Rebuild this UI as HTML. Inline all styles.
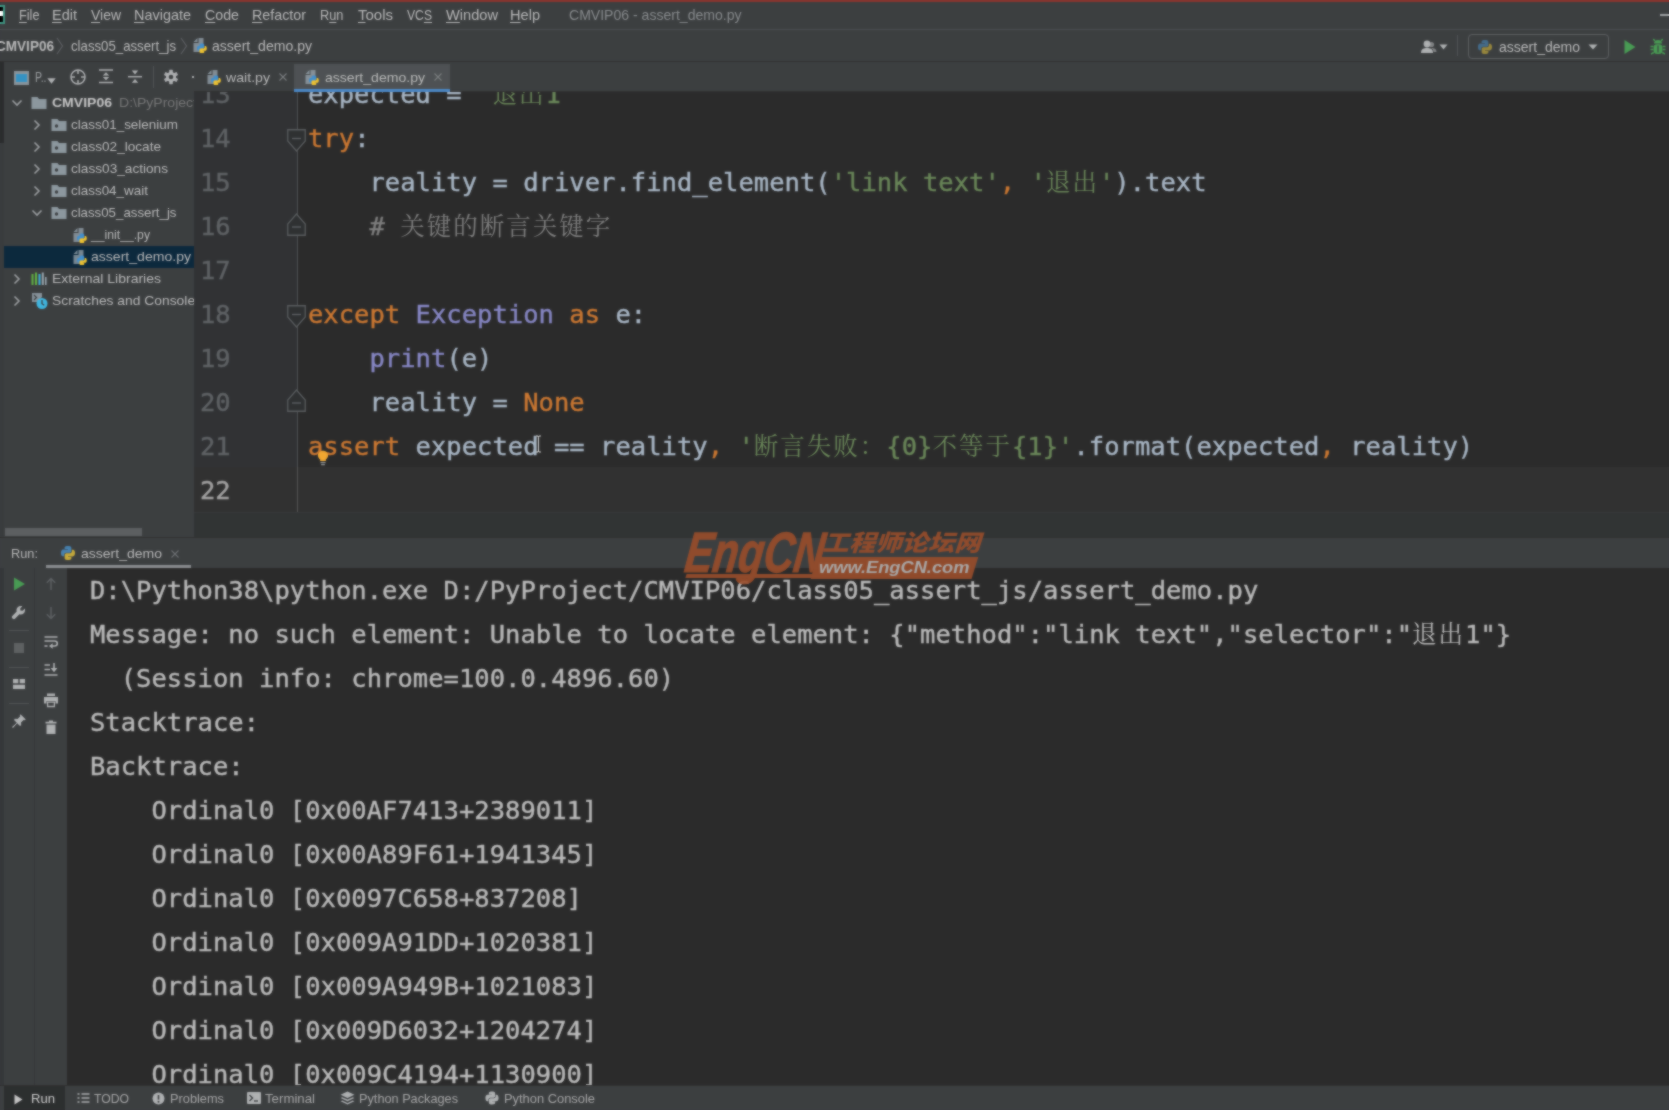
<!DOCTYPE html>
<html lang="zh">
<head>
<meta charset="utf-8">
<title>CMVIP06 - assert_demo.py</title>
<style>
*{box-sizing:border-box;margin:0;padding:0}
html,body{width:1669px;height:1110px;overflow:hidden;background:#3c3f41}
body{position:relative;font-family:"Liberation Sans","Noto Sans CJK SC",sans-serif;font-size:13.5px;color:#bbbbbb}
#w{position:absolute;left:0;top:0;width:1669px;height:1110px;will-change:transform;}
#soft{position:absolute;left:0;top:0;width:1669px;height:1110px;-webkit-backdrop-filter:blur(0.8px);backdrop-filter:blur(0.8px);opacity:.65;pointer-events:none}
.abs{position:absolute}
.t{position:absolute;white-space:pre;line-height:1;transform-origin:0 50%}
u{text-decoration-thickness:1px;text-underline-offset:2px}
#redline{left:-10px;top:-10px;width:1689px;height:12px;background:#88352f}
#menubar{left:0;top:2px;width:1679px;height:28px;background:#3c3f41;border-bottom:1px solid #4b4e50}
#menubar .t{top:6px;font-size:14.5px;color:#bbbbbb}
#navbar{left:0;top:30px;width:1679px;height:32px;background:#3c3f41;border-bottom:1px solid #323232}
#navbar .t{top:9px;font-size:14.5px;color:#bbbbbb}
#proj{left:0;top:62px;width:194px;height:475px;background:#3c3f41}
#ptool{left:0;top:0;width:194px;height:29px}
.row{position:absolute;left:4px;width:190px;height:22px}
.row .t{top:4px;font-size:13.5px;color:#bbbbbb}
.sel{background:#0d293e}
#tabs{left:194px;top:62px;width:1485px;height:30px;background:#3c3f41}
#tabs .t{top:9px;font-size:13.5px;color:#bbbbbb}
#editor{left:194px;top:92px;width:1485px;height:420px;background:#2b2b2b;overflow:hidden}
#gutter{left:0;top:0;width:104px;height:420px;background:#313335;border-right:1.5px solid #4f5153}
.mono{font-family:"DejaVu Sans Mono","Liberation Mono","Noto Serif CJK SC",monospace;font-size:25.5px;letter-spacing:0.02px;-webkit-text-stroke:0.4px}
.ln{position:absolute;left:6px;color:#606366;line-height:44px;height:44px;white-space:pre}
.cl{position:absolute;left:114px;color:#a9b7c6;line-height:44px;height:44px;white-space:pre}
.k{color:#cc7832}.s{color:#6a8759}.b{color:#8888c6}.c{color:#808080}
.cj{font-family:"Liberation Mono","Noto Serif CJK SC","Noto Sans CJK SC",serif;font-size:24.5px;letter-spacing:2px;line-height:0;-webkit-text-stroke:0}
#hsb{left:194px;top:512px;width:1485px;height:26px;background:#313435;border-top:1px solid #37393b}
#runhdr{left:0;top:537px;width:1679px;height:31px;background:#3c3f41;border-top:1px solid #323232}
#runhdr .t{top:9px;font-size:13.5px;color:#bbbbbb}
#runtb{left:0;top:568px;width:67px;height:517px;background:#3c3f41}
#console{left:67px;top:568px;width:1612px;height:517px;background:#2b2b2b;overflow:hidden}
.ol{position:absolute;left:23px;color:#bbbbbb;line-height:44px;height:44px;white-space:pre}
#bottom{left:0;top:1085px;width:1679px;height:35px;background:#3c3f41;border-top:1px solid #323232}
#bottom .t{top:6px;font-size:13px;color:#a8a8a8}
</style>
</head>
<body>
<div id="w">

<div id="redline" class="abs"></div>
<div id="menubar" class="abs">
<div class="abs" style="left:-11px;top:3px;width:16px;height:19px;background:#000;border:2px solid #3f9482;border-left:0"></div>
<div class="abs" style="left:-3px;top:9px;width:6px;height:5px;background:#fff"></div>
<span class="t fit" style="left:18.5px;transform:scaleX(0.8770)"><u>F</u>ile</span>
<span class="t fit" style="left:52px;transform:scaleX(1.0000)"><u>E</u>dit</span>
<span class="t fit" style="left:90.5px;transform:scaleX(0.9619)"><u>V</u>iew</span>
<span class="t fit" style="left:133.5px;transform:scaleX(0.9956)"><u>N</u>avigate</span>
<span class="t fit" style="left:205px;transform:scaleX(0.9802)"><u>C</u>ode</span>
<span class="t fit" style="left:252px;transform:scaleX(0.9849)"><u>R</u>efactor</span>
<span class="t fit" style="left:319.5px;transform:scaleX(0.8821)">R<u>u</u>n</span>
<span class="t fit" style="left:358px;transform:scaleX(1.0337)"><u>T</u>ools</span>
<span class="t fit" style="left:407px;transform:scaleX(0.8381)">VC<u>S</u></span>
<span class="t fit" style="left:445.5px;transform:scaleX(1.0082)"><u>W</u>indow</span>
<span class="t fit" style="left:510px;transform:scaleX(1.0052)"><u>H</u>elp</span>
<span class="t fit" style="left:568.5px;color:#8a8d8f;transform:scaleX(0.9685)">CMVIP06 - assert_demo.py</span>
<div class="abs" style="left:1660px;top:12px;width:12px;height:1.5px;background:#a0a3a5"></div>
</div>
<div id="navbar" class="abs">
<span class="t fit" style="left:-4px;font-weight:bold;transform:scaleX(0.9345)">CMVIP06</span>
<svg class="abs" style="left:55px;top:7px;" width="10" height="18" viewBox="0 0 10 18"><path d="M2 1 L7.5 9 L2 17" fill="none" stroke="#5e6163" stroke-width="1.2"/></svg>
<span class="t fit" style="left:71px;transform:scaleX(0.9111)">class05_assert_js</span>
<svg class="abs" style="left:179px;top:7px;" width="10" height="18" viewBox="0 0 10 18"><path d="M2 1 L7.5 9 L2 17" fill="none" stroke="#5e6163" stroke-width="1.2"/></svg>
<svg class="abs" style="left:193px;top:7px;" width="16" height="16" viewBox="0 0 16 16"><g transform="translate(-2.5,0)"><path d="M7 1 L3 5 L7 5 Z" fill="#9aa7b0" opacity=".8"/><path d="M8 1 V6 H3 V15 H13 V1 Z" fill="#9aa7b0" opacity=".75"/><g transform="translate(5.8,5.8) scale(0.7)"><path d="M7.93,1 C4.39,1 4.61,2.53 4.61,2.53 L4.61,4.12 L8,4.12 L8,4.6 L3.27,4.6 C3.27,4.6 1,4.34 1,7.91 C1,11.48 2.98,11.35 2.98,11.35 L4.16,11.35 L4.16,9.69 C4.16,9.69 4.1,7.72 6.11,7.72 L9.47,7.72 C9.47,7.72 11.35,7.75 11.35,5.9 L11.35,2.85 C11.35,2.85 11.64,1 7.93,1 Z" fill="#3f8fd0" opacity="1"/><path d="M8.07,15 C11.61,15 11.39,13.47 11.39,13.47 L11.39,11.88 L8,11.88 L8,11.4 L12.73,11.4 C12.73,11.4 15,11.66 15,8.09 C15,4.52 13.02,4.65 13.02,4.65 L11.84,4.65 L11.84,6.31 C11.84,6.31 11.9,8.28 9.89,8.28 L6.53,8.28 C6.53,8.28 4.65,8.25 4.65,10.1 L4.65,13.15 C4.65,13.15 4.36,15 8.07,15 Z" fill="#f2c52e" opacity="1"/></g></g></svg>
<span class="t fit" style="left:212px;transform:scaleX(0.9693)">assert_demo.py</span>
<svg class="abs" style="left:1420px;top:8.8px;" width="18" height="16" viewBox="0 0 18 16"><circle cx="7" cy="5" r="3.4" fill="#afb1b3"/><path d="M1 14 C1 9.5 4 9 7 9 C10 9 13 9.5 13 14 Z" fill="#afb1b3"/><circle cx="11.5" cy="5.5" r="2.6" fill="#afb1b3" opacity=".6"/><path d="M11 9 C14 9 16.5 9.5 16.5 13 H13.5 C13.5 11 12.5 9.8 11 9Z" fill="#afb1b3" opacity=".6"/></svg>
<svg class="abs" style="left:1439px;top:13.8px;" width="9" height="6" viewBox="0 0 9 6"><path d="M0.5 0.5 H8.5 L4.5 5.5 Z" fill="#afb1b3"/></svg>
<div class="abs" style="left:1457px;top:5px;width:1px;height:21px;background:#515457"></div>
<div class="abs" style="left:1468px;top:3.8px;width:141px;height:25px;border:1px solid #5e6163;border-radius:4px"></div>
<svg class="abs" style="left:1477px;top:8.8px;" width="16" height="16" viewBox="0 0 16 16"><path d="M7.93,1 C4.39,1 4.61,2.53 4.61,2.53 L4.61,4.12 L8,4.12 L8,4.6 L3.27,4.6 C3.27,4.6 1,4.34 1,7.91 C1,11.48 2.98,11.35 2.98,11.35 L4.16,11.35 L4.16,9.69 C4.16,9.69 4.1,7.72 6.11,7.72 L9.47,7.72 C9.47,7.72 11.35,7.75 11.35,5.9 L11.35,2.85 C11.35,2.85 11.64,1 7.93,1 Z" fill="#4b9ad6" opacity="0.5"/><path d="M8.07,15 C11.61,15 11.39,13.47 11.39,13.47 L11.39,11.88 L8,11.88 L8,11.4 L12.73,11.4 C12.73,11.4 15,11.66 15,8.09 C15,4.52 13.02,4.65 13.02,4.65 L11.84,4.65 L11.84,6.31 C11.84,6.31 11.9,8.28 9.89,8.28 L6.53,8.28 C6.53,8.28 4.65,8.25 4.65,10.1 L4.65,13.15 C4.65,13.15 4.36,15 8.07,15 Z" fill="#f4cf3a" opacity="0.5"/></svg>
<span class="t fit" style="left:1499px;top:10.2px;font-size:14px;transform:scaleX(1.0008)">assert_demo</span>
<svg class="abs" style="left:1588px;top:13.8px;" width="10" height="6" viewBox="0 0 10 6"><path d="M0.5 0.5 H9.5 L5 5.5 Z" fill="#afb1b3"/></svg>
<svg class="abs" style="left:1623px;top:8.5px;" width="14" height="16" viewBox="0 0 14 16"><path d="M1.5 1 L12.5 8 L1.5 15 Z" fill="#499c54"/></svg>
<svg class="abs" style="left:1648.5px;top:7.8px;" width="18" height="18" viewBox="0 0 18 18"><path d="M5 5.5 C5 3.2 6.7 2 9 2 C11.3 2 13 3.2 13 5.5 Z" fill="#499c54"/><rect x="4.6" y="6.3" width="8.8" height="9.7" rx="3.4" fill="#499c54"/><path d="M4.5 8.5 H1.5 M4.5 11.5 H1.5 M4.8 14.5 L2 16 M13.5 8.5 H16.5 M13.5 11.5 H16.5 M13.2 14.5 L16 16 M6 3 L4.3 1 M12 3 L13.7 1" stroke="#499c54" stroke-width="1.5" fill="none"/><rect x="8.4" y="7.5" width="1.2" height="7" fill="#3c3f41"/></svg>
</div>
<div id="proj" class="abs">
<div class="abs" style="left:-10px;top:0;width:14px;height:81px;background:#2b2d2e"></div>
<div class="abs" style="left:-10px;top:81px;width:14px;height:394px;background:#393c3e"></div>
<div id="ptool" class="abs">
<div class="abs" style="left:13.5px;top:8.5px;width:15.5px;height:14px;background:#8b959c"></div>
<div class="abs" style="left:15.7px;top:12px;width:11.2px;height:8.3px;background:#3592c4"></div>
<span class="t fit" style="left:35px;top:8px;font-size:14px;color:#9fa2a4;transform:scaleX(0.7510)">P..</span>
<svg class="abs" style="left:47px;top:16px;" width="9" height="6" viewBox="0 0 9 6"><path d="M0.3 0.3 H8.7 L4.5 5.7 Z" fill="#afb1b3"/></svg>
<svg class="abs" style="left:69px;top:5.5px;" width="18" height="18" viewBox="0 0 18 18"><circle cx="9" cy="9" r="7" fill="none" stroke="#afb1b3" stroke-width="1.5"/><path d="M9 2 V6 M9 12 V16 M2 9 H6 M12 9 H16" stroke="#afb1b3" stroke-width="1.5"/></svg>
<svg class="abs" style="left:98px;top:6.3px;" width="16" height="18" viewBox="0 0 16 18"><path d="M1 2 H15 M1 14.5 H15" stroke="#afb1b3" stroke-width="1.5"/><path d="M8 4.3 L11.2 7.5 H4.8 Z M8 12.3 L11.2 9.1 H4.8 Z" fill="#afb1b3"/></svg>
<svg class="abs" style="left:127px;top:5.7px;" width="16" height="18" viewBox="0 0 16 18"><path d="M1 8.7 H15" stroke="#afb1b3" stroke-width="1.5"/><path d="M8 6.4 L11.2 2.6 H4.8 Z M8 11 L11.2 14.8 H4.8 Z" fill="#afb1b3"/></svg>
<div class="abs" style="left:152.5px;top:4px;width:1px;height:22px;background:#505355"></div>
<svg class="abs" style="left:163px;top:6.5px;" width="16" height="16" viewBox="0 0 16 16"><g transform="translate(8,8)"><rect x="-1.8" y="-7.2" width="3.6" height="14.4" rx=".6" fill="#afb1b3" transform="rotate(0)"/><rect x="-1.8" y="-7.2" width="3.6" height="14.4" rx=".6" fill="#afb1b3" transform="rotate(60)"/><rect x="-1.8" y="-7.2" width="3.6" height="14.4" rx=".6" fill="#afb1b3" transform="rotate(120)"/><circle r="5" fill="#afb1b3"/><circle r="2.3" fill="#3c3f41"/></g></svg>
<div class="abs" style="left:191.5px;top:14px;width:4px;height:1.5px;background:#afb1b3"></div>
</div>
<div class="row" style="top:29.5px">
<svg class="abs" style="left:4.5px;top:3px;" width="16" height="16" viewBox="0 0 16 16"><path d="M3.5 5.5 L8 10 L12.5 5.5" fill="none" stroke="#9da0a2" stroke-width="1.6"/></svg>
<svg class="abs" style="left:27px;top:3px;" width="16" height="16" viewBox="0 0 16 16"><path d="M0.5 2 H6.5 L8 4 H15.5 V14 H0.5 Z" fill="#9aa7b0" opacity=".85"/></svg>
<span class="t fit" style="left:48px;font-weight:bold;color:#c8c8c8;transform:scaleX(1.0384)">CMVIP06</span>
<span class="t fit" style="left:115px;color:#787878;transform:scaleX(1.0396)">D:\PyProject</span>
</div>
<div class="row" style="top:51.5px">
<svg class="abs" style="left:24.5px;top:3px;" width="16" height="16" viewBox="0 0 16 16"><path d="M5.5 3.5 L10 8 L5.5 12.5" fill="none" stroke="#9da0a2" stroke-width="1.6"/></svg>
<svg class="abs" style="left:47px;top:3px;" width="16" height="16" viewBox="0 0 16 16"><path d="M0.5 2 H6.5 L8 4 H15.5 V14 H0.5 Z" fill="#9aa7b0" opacity=".85"/><circle cx="5.5" cy="9" r="1.7" fill="#3c3f41"/></svg>
<span class="t fit" style="left:67px;transform:scaleX(0.9971)">class01_selenium</span>
</div>
<div class="row" style="top:73.5px">
<svg class="abs" style="left:24.5px;top:3px;" width="16" height="16" viewBox="0 0 16 16"><path d="M5.5 3.5 L10 8 L5.5 12.5" fill="none" stroke="#9da0a2" stroke-width="1.6"/></svg>
<svg class="abs" style="left:47px;top:3px;" width="16" height="16" viewBox="0 0 16 16"><path d="M0.5 2 H6.5 L8 4 H15.5 V14 H0.5 Z" fill="#9aa7b0" opacity=".85"/><circle cx="5.5" cy="9" r="1.7" fill="#3c3f41"/></svg>
<span class="t fit" style="left:67px;transform:scaleX(1.0077)">class02_locate</span>
</div>
<div class="row" style="top:95.5px">
<svg class="abs" style="left:24.5px;top:3px;" width="16" height="16" viewBox="0 0 16 16"><path d="M5.5 3.5 L10 8 L5.5 12.5" fill="none" stroke="#9da0a2" stroke-width="1.6"/></svg>
<svg class="abs" style="left:47px;top:3px;" width="16" height="16" viewBox="0 0 16 16"><path d="M0.5 2 H6.5 L8 4 H15.5 V14 H0.5 Z" fill="#9aa7b0" opacity=".85"/><circle cx="5.5" cy="9" r="1.7" fill="#3c3f41"/></svg>
<span class="t fit" style="left:67px;transform:scaleX(1.0098)">class03_actions</span>
</div>
<div class="row" style="top:117.5px">
<svg class="abs" style="left:24.5px;top:3px;" width="16" height="16" viewBox="0 0 16 16"><path d="M5.5 3.5 L10 8 L5.5 12.5" fill="none" stroke="#9da0a2" stroke-width="1.6"/></svg>
<svg class="abs" style="left:47px;top:3px;" width="16" height="16" viewBox="0 0 16 16"><path d="M0.5 2 H6.5 L8 4 H15.5 V14 H0.5 Z" fill="#9aa7b0" opacity=".85"/><circle cx="5.5" cy="9" r="1.7" fill="#3c3f41"/></svg>
<span class="t fit" style="left:67px;transform:scaleX(0.9962)">class04_wait</span>
</div>
<div class="row" style="top:139.5px">
<svg class="abs" style="left:24.5px;top:3px;" width="16" height="16" viewBox="0 0 16 16"><path d="M3.5 5.5 L8 10 L12.5 5.5" fill="none" stroke="#9da0a2" stroke-width="1.6"/></svg>
<svg class="abs" style="left:47px;top:3px;" width="16" height="16" viewBox="0 0 16 16"><path d="M0.5 2 H6.5 L8 4 H15.5 V14 H0.5 Z" fill="#9aa7b0" opacity=".85"/><circle cx="5.5" cy="9" r="1.7" fill="#3c3f41"/></svg>
<span class="t fit" style="left:67px;transform:scaleX(0.9831)">class05_assert_js</span>
</div>
<div class="row" style="top:161.5px">
<svg class="abs" style="left:69px;top:3px;" width="16" height="16" viewBox="0 0 16 16"><g transform="translate(-2.5,0)"><path d="M7 1 L3 5 L7 5 Z" fill="#9aa7b0" opacity=".8"/><path d="M8 1 V6 H3 V15 H13 V1 Z" fill="#9aa7b0" opacity=".75"/><g transform="translate(5.8,5.8) scale(0.7)"><path d="M7.93,1 C4.39,1 4.61,2.53 4.61,2.53 L4.61,4.12 L8,4.12 L8,4.6 L3.27,4.6 C3.27,4.6 1,4.34 1,7.91 C1,11.48 2.98,11.35 2.98,11.35 L4.16,11.35 L4.16,9.69 C4.16,9.69 4.1,7.72 6.11,7.72 L9.47,7.72 C9.47,7.72 11.35,7.75 11.35,5.9 L11.35,2.85 C11.35,2.85 11.64,1 7.93,1 Z" fill="#3f8fd0" opacity="1"/><path d="M8.07,15 C11.61,15 11.39,13.47 11.39,13.47 L11.39,11.88 L8,11.88 L8,11.4 L12.73,11.4 C12.73,11.4 15,11.66 15,8.09 C15,4.52 13.02,4.65 13.02,4.65 L11.84,4.65 L11.84,6.31 C11.84,6.31 11.9,8.28 9.89,8.28 L6.53,8.28 C6.53,8.28 4.65,8.25 4.65,10.1 L4.65,13.15 C4.65,13.15 4.36,15 8.07,15 Z" fill="#f2c52e" opacity="1"/></g></g></svg>
<span class="t fit" style="left:87px;transform:scaleX(0.9033)">__init__.py</span>
</div>
<div class="row sel" style="top:183.5px">
<svg class="abs" style="left:69px;top:3px;" width="16" height="16" viewBox="0 0 16 16"><g transform="translate(-2.5,0)"><path d="M7 1 L3 5 L7 5 Z" fill="#9aa7b0" opacity=".8"/><path d="M8 1 V6 H3 V15 H13 V1 Z" fill="#9aa7b0" opacity=".75"/><g transform="translate(5.8,5.8) scale(0.7)"><path d="M7.93,1 C4.39,1 4.61,2.53 4.61,2.53 L4.61,4.12 L8,4.12 L8,4.6 L3.27,4.6 C3.27,4.6 1,4.34 1,7.91 C1,11.48 2.98,11.35 2.98,11.35 L4.16,11.35 L4.16,9.69 C4.16,9.69 4.1,7.72 6.11,7.72 L9.47,7.72 C9.47,7.72 11.35,7.75 11.35,5.9 L11.35,2.85 C11.35,2.85 11.64,1 7.93,1 Z" fill="#3f8fd0" opacity="1"/><path d="M8.07,15 C11.61,15 11.39,13.47 11.39,13.47 L11.39,11.88 L8,11.88 L8,11.4 L12.73,11.4 C12.73,11.4 15,11.66 15,8.09 C15,4.52 13.02,4.65 13.02,4.65 L11.84,4.65 L11.84,6.31 C11.84,6.31 11.9,8.28 9.89,8.28 L6.53,8.28 C6.53,8.28 4.65,8.25 4.65,10.1 L4.65,13.15 C4.65,13.15 4.36,15 8.07,15 Z" fill="#f2c52e" opacity="1"/></g></g></svg>
<span class="t fit" style="left:87px;transform:scaleX(1.0410)">assert_demo.py</span>
</div>
<div class="row" style="top:205.5px">
<svg class="abs" style="left:4.5px;top:3px;" width="16" height="16" viewBox="0 0 16 16"><path d="M5.5 3.5 L10 8 L5.5 12.5" fill="none" stroke="#9da0a2" stroke-width="1.6"/></svg>
<svg class="abs" style="left:27px;top:3px;" width="16" height="16" viewBox="0 0 16 16"><path d="M1.5 3 V14" stroke="#62b543" stroke-width="2"/><path d="M5 1.5 V14" stroke="#62b543" stroke-width="2"/><path d="M8.5 3 V14" stroke="#40b6e0" stroke-width="2"/><path d="M11.8 1.5 V14" stroke="#9aa7b0" stroke-width="2"/><path d="M14.8 6 V14" stroke="#9aa7b0" stroke-width="1.6"/></svg>
<span class="t fit" style="left:48px;transform:scaleX(1.0376)">External Libraries</span>
</div>
<div class="row" style="top:227.5px">
<svg class="abs" style="left:4.5px;top:3px;" width="16" height="16" viewBox="0 0 16 16"><path d="M5.5 3.5 L10 8 L5.5 12.5" fill="none" stroke="#9da0a2" stroke-width="1.6"/></svg>
<svg class="abs" style="left:27px;top:2px;" width="18" height="18" viewBox="0 0 18 18"><path d="M1 1 H11 V5 L6 10 H1 Z" fill="#9aa7b0" opacity=".8"/><path d="M3 3 L5.5 5.5 L3 8" stroke="#3c3f41" stroke-width="1.2" fill="none"/><circle cx="11" cy="11.5" r="5.5" fill="#40b6e0"/><path d="M11 8 V11.7 L13.3 13.2" stroke="#3c3f41" stroke-width="1.3" fill="none"/></svg>
<span class="t fit" style="left:48px;transform:scaleX(1.0250)">Scratches and Consoles</span>
</div>
<div class="abs" style="left:5px;top:465.5px;width:137px;height:8.5px;background:#5c5f61"></div>
</div>
<div id="tabs" class="abs">
<div class="abs" style="left:0;top:29px;width:1485px;height:1px;background:#323232"></div>
<div class="abs" style="left:100px;top:2px;width:156px;height:28px;background:#4e5254"></div>
<div class="abs" style="left:100px;top:26.5px;width:156px;height:3.5px;background:#4a88c7"></div>
<svg class="abs" style="left:13px;top:7px;" width="16" height="16" viewBox="0 0 16 16"><g transform="translate(-2.5,0)"><path d="M7 1 L3 5 L7 5 Z" fill="#9aa7b0" opacity=".8"/><path d="M8 1 V6 H3 V15 H13 V1 Z" fill="#9aa7b0" opacity=".75"/><g transform="translate(5.8,5.8) scale(0.7)"><path d="M7.93,1 C4.39,1 4.61,2.53 4.61,2.53 L4.61,4.12 L8,4.12 L8,4.6 L3.27,4.6 C3.27,4.6 1,4.34 1,7.91 C1,11.48 2.98,11.35 2.98,11.35 L4.16,11.35 L4.16,9.69 C4.16,9.69 4.1,7.72 6.11,7.72 L9.47,7.72 C9.47,7.72 11.35,7.75 11.35,5.9 L11.35,2.85 C11.35,2.85 11.64,1 7.93,1 Z" fill="#3f8fd0" opacity="1"/><path d="M8.07,15 C11.61,15 11.39,13.47 11.39,13.47 L11.39,11.88 L8,11.88 L8,11.4 L12.73,11.4 C12.73,11.4 15,11.66 15,8.09 C15,4.52 13.02,4.65 13.02,4.65 L11.84,4.65 L11.84,6.31 C11.84,6.31 11.9,8.28 9.89,8.28 L6.53,8.28 C6.53,8.28 4.65,8.25 4.65,10.1 L4.65,13.15 C4.65,13.15 4.36,15 8.07,15 Z" fill="#f2c52e" opacity="1"/></g></g></svg>
<span class="t fit" style="left:32px;transform:scaleX(1.0468)">wait.py</span>
<svg class="abs" style="left:84px;top:9.5px;" width="10" height="10" viewBox="0 0 10 10"><path d="M1.5 1.5 L8.5 8.5 M8.5 1.5 L1.5 8.5" stroke="#7c7f81" stroke-width="1.1" fill="none"/></svg>
<svg class="abs" style="left:111px;top:7px;" width="16" height="16" viewBox="0 0 16 16"><g transform="translate(-2.5,0)"><path d="M7 1 L3 5 L7 5 Z" fill="#9aa7b0" opacity=".8"/><path d="M8 1 V6 H3 V15 H13 V1 Z" fill="#9aa7b0" opacity=".75"/><g transform="translate(5.8,5.8) scale(0.7)"><path d="M7.93,1 C4.39,1 4.61,2.53 4.61,2.53 L4.61,4.12 L8,4.12 L8,4.6 L3.27,4.6 C3.27,4.6 1,4.34 1,7.91 C1,11.48 2.98,11.35 2.98,11.35 L4.16,11.35 L4.16,9.69 C4.16,9.69 4.1,7.72 6.11,7.72 L9.47,7.72 C9.47,7.72 11.35,7.75 11.35,5.9 L11.35,2.85 C11.35,2.85 11.64,1 7.93,1 Z" fill="#3f8fd0" opacity="1"/><path d="M8.07,15 C11.61,15 11.39,13.47 11.39,13.47 L11.39,11.88 L8,11.88 L8,11.4 L12.73,11.4 C12.73,11.4 15,11.66 15,8.09 C15,4.52 13.02,4.65 13.02,4.65 L11.84,4.65 L11.84,6.31 C11.84,6.31 11.9,8.28 9.89,8.28 L6.53,8.28 C6.53,8.28 4.65,8.25 4.65,10.1 L4.65,13.15 C4.65,13.15 4.36,15 8.07,15 Z" fill="#f2c52e" opacity="1"/></g></g></svg>
<span class="t fit" style="left:131px;transform:scaleX(1.0410)">assert_demo.py</span>
<svg class="abs" style="left:239px;top:9.5px;" width="10" height="10" viewBox="0 0 10 10"><path d="M1.5 1.5 L8.5 8.5 M8.5 1.5 L1.5 8.5" stroke="#7c7f81" stroke-width="1.1" fill="none"/></svg>
</div>
<div id="editor" class="abs mono">
<div id="gutter" class="abs"></div>
<div class="abs" style="left:0;top:375px;width:1485px;height:45px;background:#323232"></div>
<div class="abs" style="left:103px;top:375px;width:1px;height:45px;background:#555555"></div>
<div class="ln" style="top:-19.6px;color:#606366">13</div>
<div class="cl" style="top:-19.6px">expected = <span class=s>'<span class="cj">退出</span>1'</span></div>
<div class="ln" style="top:24.4px;color:#606366">14</div>
<div class="cl" style="top:24.4px"><span class=k>try</span>:</div>
<div class="ln" style="top:68.4px;color:#606366">15</div>
<div class="cl" style="top:68.4px">    reality = driver.find_element(<span class=s>'link text'</span><span class=k>,</span> <span class=s>'<span class="cj">退出</span>'</span>).text</div>
<div class="ln" style="top:112.4px;color:#606366">16</div>
<div class="cl" style="top:112.4px">    <span class=c># <span class="cj">关键的断言关键字</span></span></div>
<div class="ln" style="top:156.4px;color:#606366">17</div>
<div class="ln" style="top:200.4px;color:#606366">18</div>
<div class="cl" style="top:200.4px"><span class=k>except</span> <span class=b>Exception</span> <span class=k>as</span> e:</div>
<div class="ln" style="top:244.4px;color:#606366">19</div>
<div class="cl" style="top:244.4px">    <span class=b>print</span>(e)</div>
<div class="ln" style="top:288.4px;color:#606366">20</div>
<div class="cl" style="top:288.4px">    reality = <span class=k>None</span></div>
<div class="ln" style="top:332.4px;color:#606366">21</div>
<div class="cl" style="top:332.4px"><span class=k>assert</span> expected == reality<span class=k>,</span> <span class=s>'<span class="cj">断言失败：</span>{0}<span class="cj">不等于</span>{1}'</span>.format(expected<span class=k>,</span> reality)</div>
<div class="ln" style="top:376.4px;color:#a4a3a3">22</div>
<svg class="abs" style="left:93px;top:37.0px;" width="19" height="23" viewBox="0 0 19 23"><path d="M0.75 0.75 H18.25 V12 L9.5 22 L0.75 12 Z" fill="#2f3133" stroke="#5a5d5f" stroke-width="1.3"/><path d="M5 9.5 H14" stroke="#606366" stroke-width="1.3"/></svg>
<svg class="abs" style="left:93px;top:121.4px;" width="19" height="23" viewBox="0 0 19 23"><path d="M0.75 22.25 H18.25 V11 L9.5 1 L0.75 11 Z" fill="#2f3133" stroke="#5a5d5f" stroke-width="1.3"/><path d="M5 14 H14" stroke="#606366" stroke-width="1.3"/></svg>
<svg class="abs" style="left:93px;top:213.0px;" width="19" height="23" viewBox="0 0 19 23"><path d="M0.75 0.75 H18.25 V12 L9.5 22 L0.75 12 Z" fill="#2f3133" stroke="#5a5d5f" stroke-width="1.3"/><path d="M5 9.5 H14" stroke="#606366" stroke-width="1.3"/></svg>
<svg class="abs" style="left:93px;top:297.4px;" width="19" height="23" viewBox="0 0 19 23"><path d="M0.75 22.25 H18.25 V11 L9.5 1 L0.75 11 Z" fill="#2f3133" stroke="#5a5d5f" stroke-width="1.3"/><path d="M5 14 H14" stroke="#606366" stroke-width="1.3"/></svg>
<svg class="abs" style="left:122.5px;top:358px;" width="12" height="17" viewBox="0 0 14 20"><path d="M7 1 C3.4 1 1 3.6 1 6.6 C1 8.8 2.3 10.2 3.6 11.3 V13 H10.4 V11.3 C11.7 10.2 13 8.8 13 6.6 C13 3.6 10.6 1 7 1Z" fill="#f0a732"/><rect x="4" y="14" width="6" height="1.6" fill="#8a8d8f"/><rect x="4.8" y="16.4" width="4.4" height="1.6" fill="#8a8d8f"/></svg>
<svg class="abs" style="left:340.5px;top:343px;" width="7" height="18" viewBox="0 0 7 18"><path d="M1 1 H2.6 L3.5 1.8 L4.4 1 H6 M3.5 1.8 V16.2 M1 17 H2.6 L3.5 16.2 L4.4 17 H6" stroke="#d0d0d0" stroke-width="1.1" fill="none"/></svg>
</div>
<div id="hsb" class="abs"></div>
<div id="runhdr" class="abs">
<span class="t fit" style="left:11px;color:#bbbbbb;transform:scaleX(0.9463)">Run:</span>
<svg class="abs" style="left:60px;top:7px;" width="16" height="16" viewBox="0 0 16 16"><path d="M7.93,1 C4.39,1 4.61,2.53 4.61,2.53 L4.61,4.12 L8,4.12 L8,4.6 L3.27,4.6 C3.27,4.6 1,4.34 1,7.91 C1,11.48 2.98,11.35 2.98,11.35 L4.16,11.35 L4.16,9.69 C4.16,9.69 4.1,7.72 6.11,7.72 L9.47,7.72 C9.47,7.72 11.35,7.75 11.35,5.9 L11.35,2.85 C11.35,2.85 11.64,1 7.93,1 Z" fill="#4b9ad6" opacity="0.75"/><path d="M8.07,15 C11.61,15 11.39,13.47 11.39,13.47 L11.39,11.88 L8,11.88 L8,11.4 L12.73,11.4 C12.73,11.4 15,11.66 15,8.09 C15,4.52 13.02,4.65 13.02,4.65 L11.84,4.65 L11.84,6.31 C11.84,6.31 11.9,8.28 9.89,8.28 L6.53,8.28 C6.53,8.28 4.65,8.25 4.65,10.1 L4.65,13.15 C4.65,13.15 4.36,15 8.07,15 Z" fill="#f4cf3a" opacity="0.75"/></svg>
<span class="t fit" style="left:81px;transform:scaleX(1.0378)">assert_demo</span>
<svg class="abs" style="left:169.5px;top:10.5px;" width="10" height="10" viewBox="0 0 10 10"><path d="M1.5 1.5 L8.5 8.5 M8.5 1.5 L1.5 8.5" stroke="#6e7173" stroke-width="1.1" fill="none"/></svg>
<div class="abs" style="left:46px;top:27px;width:145px;height:3px;background:#8a8d91"></div>
</div>
<div id="runtb" class="abs">
<div class="abs" style="left:-10px;top:0;width:14px;height:517px;background:#35383a"></div>
<div class="abs" style="left:34px;top:0;width:1px;height:517px;background:#353739"></div>
<svg class="abs" style="left:11.0px;top:7.5px;" width="16" height="16" viewBox="0 0 16 16"><path d="M3 1.5 L14 8 L3 14.5 Z" fill="#499c54"/></svg>
<svg class="abs" style="left:11.0px;top:36.0px;" width="16" height="16" viewBox="0 0 16 16"><path d="M13.8 4.6 L11.6 6.8 L9.4 6.6 L9.2 4.4 L11.4 2.2 C9.8 1.6 7.9 2 6.7 3.2 C5.5 4.4 5.2 6.1 5.7 7.6 L1.3 12 C0.7 12.6 0.7 13.6 1.3 14.2 L1.8 14.7 C2.4 15.3 3.4 15.3 4 14.7 L8.4 10.3 C9.9 10.8 11.6 10.5 12.8 9.3 C14 8.1 14.4 6.2 13.8 4.6 Z" fill="#afb1b3"/></svg>
<div class="abs" style="left:9px;top:62px;width:20px;height:1px;background:#505355"></div>
<svg class="abs" style="left:11.0px;top:72.0px;" width="16" height="16" viewBox="0 0 16 16"><rect x="3" y="3" width="10" height="10" fill="#5e6163"/></svg>
<div class="abs" style="left:9px;top:98.5px;width:20px;height:1px;background:#505355"></div>
<svg class="abs" style="left:11.0px;top:108.0px;" width="16" height="16" viewBox="0 0 16 16"><path d="M2 3 H7.3 V7.3 H2 Z M8.7 3 H14 V7.3 H8.7 Z M2 8.7 H14 V13 H2 Z" fill="#afb1b3"/></svg>
<div class="abs" style="left:9px;top:135px;width:20px;height:1px;background:#505355"></div>
<svg class="abs" style="left:11.0px;top:145.0px;" width="16" height="16" viewBox="0 0 16 16"><path d="M9.5 1.2 L14.8 6.5 L13.6 7.2 L12.6 6.9 L10 9.5 L10.2 12.2 L9 13 L6.2 10.2 L2 15 L1 14 L5.8 9.8 L3 7 L3.8 5.8 L6.5 6 L9.1 3.4 L8.8 2.4 Z" fill="#afb1b3"/></svg>
<svg class="abs" style="left:43.0px;top:7.5px;" width="16" height="16" viewBox="0 0 16 16"><path d="M8 2.5 V14 M3.8 6.8 L8 2.5 L12.2 6.8" stroke="#5e6163" stroke-width="1.5" fill="none"/></svg>
<svg class="abs" style="left:43.0px;top:37.0px;" width="16" height="16" viewBox="0 0 16 16"><path d="M8 2 V13.5 M3.8 9.2 L8 13.5 L12.2 9.2" stroke="#5e6163" stroke-width="1.5" fill="none"/></svg>
<svg class="abs" style="left:43.0px;top:66.0px;" width="16" height="16" viewBox="0 0 16 16"><path d="M1.5 3 H14.5 M1.5 7 H11.5 C15.2 7 15.2 12 11.5 12 H9" stroke="#afb1b3" stroke-width="1.6" fill="none"/><path d="M9.6 9.2 V14.8 L6 12 Z" fill="#afb1b3"/><path d="M1.5 12 H4.5" stroke="#afb1b3" stroke-width="1.6"/></svg>
<svg class="abs" style="left:43.0px;top:93.0px;" width="16" height="16" viewBox="0 0 16 16"><path d="M1.5 4 H7 M1.5 8.5 H7 M1.5 14 H14.5" stroke="#afb1b3" stroke-width="1.6" fill="none"/><path d="M11 2 V10" stroke="#afb1b3" stroke-width="1.6"/><path d="M7.6 7 H14.4 L11 11.2 Z" fill="#afb1b3"/></svg>
<svg class="abs" style="left:43.0px;top:123.5px;" width="16" height="16" viewBox="0 0 16 16"><path d="M4 1.5 H12 V4 H4 Z" fill="#afb1b3"/><path d="M1 5 H15 V11.5 H12.5 V9 H3.5 V11.5 H1 Z" fill="#afb1b3"/><path d="M4.6 10.2 H11.4 V14.5 H4.6 Z" fill="none" stroke="#afb1b3" stroke-width="1.3"/></svg>
<svg class="abs" style="left:43.0px;top:150.5px;" width="16" height="16" viewBox="0 0 16 16"><path d="M6 1.5 H10 V2.8 H13.5 V4.6 H2.5 V2.8 H6 Z" fill="#afb1b3"/><path d="M3.5 5.6 H12.5 V15 H3.5 Z" fill="#afb1b3"/></svg>
</div>
<div id="console" class="abs mono">
<div class="ol" style="top:0.4px">D:\Python38\python.exe D:/PyProject/CMVIP06/class05_assert_js/assert_demo.py</div>
<div class="ol" style="top:44.4px">Message: no such element: Unable to locate element: {"method":"link text","selector":"<span class="cj">退出</span>1"}</div>
<div class="ol" style="top:88.4px">  (Session info: chrome=100.0.4896.60)</div>
<div class="ol" style="top:132.4px">Stacktrace:</div>
<div class="ol" style="top:176.4px">Backtrace:</div>
<div class="ol" style="top:220.4px">    Ordinal0 [0x00AF7413+2389011]</div>
<div class="ol" style="top:264.4px">    Ordinal0 [0x00A89F61+1941345]</div>
<div class="ol" style="top:308.4px">    Ordinal0 [0x0097C658+837208]</div>
<div class="ol" style="top:352.4px">    Ordinal0 [0x009A91DD+1020381]</div>
<div class="ol" style="top:396.4px">    Ordinal0 [0x009A949B+1021083]</div>
<div class="ol" style="top:440.4px">    Ordinal0 [0x009D6032+1204274]</div>
<div class="ol" style="top:484.4px">    Ordinal0 [0x009C4194+1130900]</div>
</div>
<div id="bottom" class="abs">
<div class="abs" style="left:4px;top:0;width:61px;height:35px;background:#2d2f30"></div>
<svg class="abs" style="left:14px;top:7.5px;" width="9" height="11" viewBox="0 0 9 11"><path d="M0.5 0.5 L8.5 5.5 L0.5 10.5 Z" fill="#c4c4c4"/></svg>
<span class="t fit" style="left:31px;color:#d0d0d0;transform:scaleX(1.0059)">Run</span>
<svg class="abs" style="left:77px;top:6.3px;" width="13" height="12" viewBox="0 0 13 12"><path d="M0.5 2 H2.5 M0.5 6 H2.5 M0.5 10 H2.5 M4.5 2 H12.5 M4.5 6 H12.5 M4.5 10 H12.5" stroke="#afb1b3" stroke-width="1.7"/></svg>
<span class="t fit" style="left:94px;transform:scaleX(0.9376)">TODO</span>
<svg class="abs" style="left:152px;top:5.7px;" width="13" height="13" viewBox="0 0 13 13"><circle cx="6.5" cy="6.5" r="6" fill="#afb1b3"/><path d="M6.5 3 V7.6" stroke="#3c3f41" stroke-width="1.6"/><circle cx="6.5" cy="9.8" r="1" fill="#3c3f41"/></svg>
<span class="t fit" style="left:170px;transform:scaleX(0.9832)">Problems</span>
<svg class="abs" style="left:247px;top:6.2px;" width="14" height="12" viewBox="0 0 14 12"><rect x="0" y="0" width="14" height="12" rx="1" fill="#afb1b3"/><path d="M2.5 3 L5.5 6 L2.5 9" stroke="#3c3f41" stroke-width="1.4" fill="none"/><path d="M7 9 H11" stroke="#3c3f41" stroke-width="1.4"/></svg>
<span class="t fit" style="left:265px;transform:scaleX(1.0178)">Terminal</span>
<svg class="abs" style="left:340px;top:5.3px;" width="15" height="14" viewBox="0 0 15 14"><path d="M7.5 0.5 L14.5 3.7 L7.5 6.9 L0.5 3.7 Z" fill="#afb1b3"/><path d="M2.2 6.2 L0.5 7 L7.5 10.2 L14.5 7 L12.8 6.2 L7.5 8.6 Z" fill="#afb1b3"/><path d="M2.2 9.5 L0.5 10.3 L7.5 13.5 L14.5 10.3 L12.8 9.5 L7.5 11.9 Z" fill="#afb1b3"/></svg>
<span class="t fit" style="left:359px;transform:scaleX(0.9784)">Python Packages</span>
<svg class="abs" style="left:485px;top:5.3px;" width="14" height="14" viewBox="0.5 0.5 15 15"><path d="M7.93,1 C4.39,1 4.61,2.53 4.61,2.53 L4.61,4.12 L8,4.12 L8,4.6 L3.27,4.6 C3.27,4.6 1,4.34 1,7.91 C1,11.48 2.98,11.35 2.98,11.35 L4.16,11.35 L4.16,9.69 C4.16,9.69 4.1,7.72 6.11,7.72 L9.47,7.72 C9.47,7.72 11.35,7.75 11.35,5.9 L11.35,2.85 C11.35,2.85 11.64,1 7.93,1 Z" fill="#afb1b3" opacity="1"/><path d="M8.07,15 C11.61,15 11.39,13.47 11.39,13.47 L11.39,11.88 L8,11.88 L8,11.4 L12.73,11.4 C12.73,11.4 15,11.66 15,8.09 C15,4.52 13.02,4.65 13.02,4.65 L11.84,4.65 L11.84,6.31 C11.84,6.31 11.9,8.28 9.89,8.28 L6.53,8.28 C6.53,8.28 4.65,8.25 4.65,10.1 L4.65,13.15 C4.65,13.15 4.36,15 8.07,15 Z" fill="#afb1b3" opacity="1"/></svg>
<span class="t fit" style="left:504px;transform:scaleX(0.9915)">Python Console</span>
</div>
<div id="wm" class="abs" style="left:0;top:0;width:1669px;height:1110px;opacity:.9;pointer-events:none">
<span class="t wmE fit" style="left:683px;top:524.6px;font-size:56.8px;font-weight:bold;font-style:italic;color:#9b4e2c;-webkit-text-stroke:1.2px #9b4e2c;transform-origin:0 85%;transform:scaleX(0.7342) skewX(-10deg)">EngCN</span>
<div class="abs" style="left:686px;top:574px;width:128px;height:3.5px;background:#9b4e2c;transform:skewX(-17deg)"></div>
<span class="t wmC fit" style="left:821px;top:532px;font-family:'Liberation Sans','Noto Sans CJK SC',sans-serif;font-size:23px;font-weight:900;color:#9b4e2c;transform-origin:0 100%;transform:scaleX(1.1449) skewX(-16deg)">工程师论坛网</span>
<div class="abs" style="left:814px;top:556.5px;width:161px;height:21.5px;background:#9b4e2c;transform:skewX(-17deg)"></div>
<span class="t fit" style="left:819px;top:558.6px;font-size:17px;font-weight:bold;font-style:italic;color:#b6b6b6;transform:scaleX(1.0742)">www.EngCN.com</span>
</div>
</div>
<div id="soft"></div>
</body></html>
